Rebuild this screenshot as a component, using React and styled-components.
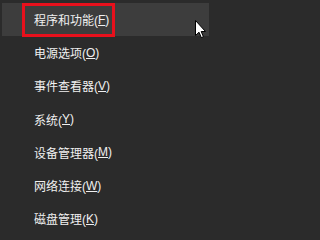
import React from 'react';
import styled, { createGlobalStyle } from 'styled-components';

const GlobalStyle = createGlobalStyle`
  html, body {
    margin: 0;
    padding: 0;
    background-color: #2b2b2b;
  }
`;

const Menu = styled.ul`
  list-style: none;
  margin: 0;
  padding: 3px 3px 0 2px;
  width: 212px;
  height: 233px;
  box-sizing: border-box;
  background-color: #2b2b2b;
  position: relative;
  font-family: 'Liberation Sans', 'Noto Sans CJK SC', sans-serif;
`;

const Item = styled.li`
  position: relative;
  display: flex;
  align-items: center;
  height: 33.2px;
  padding-left: 32px;
  font-size: 12px;
  color: #f0f0f0;
  background-color: ${(p) => (p.$active ? '#3d3d3d' : 'transparent')};
`;

const Key = styled.span`
  text-decoration: underline;
  text-underline-offset: 1px;
`;

const Marker = styled.div`
  position: absolute;
  left: 20px;
  top: 0;
  width: 93px;
  height: 34px;
  box-sizing: border-box;
  border: 3px solid #e8101c;
`;

const Pointer = styled.svg`
  position: absolute;
  left: 195px;
  top: 20px;
`;

const items = [
  { label: '程序和功能', key: 'F' },
  { label: '电源选项', key: 'O' },
  { label: '事件查看器', key: 'V' },
  { label: '系统', key: 'Y' },
  { label: '设备管理器', key: 'M' },
  { label: '网络连接', key: 'W' },
  { label: '磁盘管理', key: 'K' },
];

const App = () => {
  return (
    <>
      <GlobalStyle />
      <Menu>
        {items.map((item, i) => (
          <Item key={item.key} $active={i === 0}>
            {item.label}(<Key>{item.key}</Key>)
            {i === 0 && <Marker />}
          </Item>
        ))}
        <Pointer width="11" height="19" viewBox="0 0 11 19">
          <path
            d="M0.5 0.5 L0.5 15.5 L4 12.2 L6.3 17.6 L8.4 16.7 L6.2 11.5 L10.5 11.5 Z"
            fill="#ffffff"
            stroke="#000000"
            strokeWidth="1"
            strokeLinejoin="miter"
          />
        </Pointer>
      </Menu>
    </>
  );
};

export default App;
